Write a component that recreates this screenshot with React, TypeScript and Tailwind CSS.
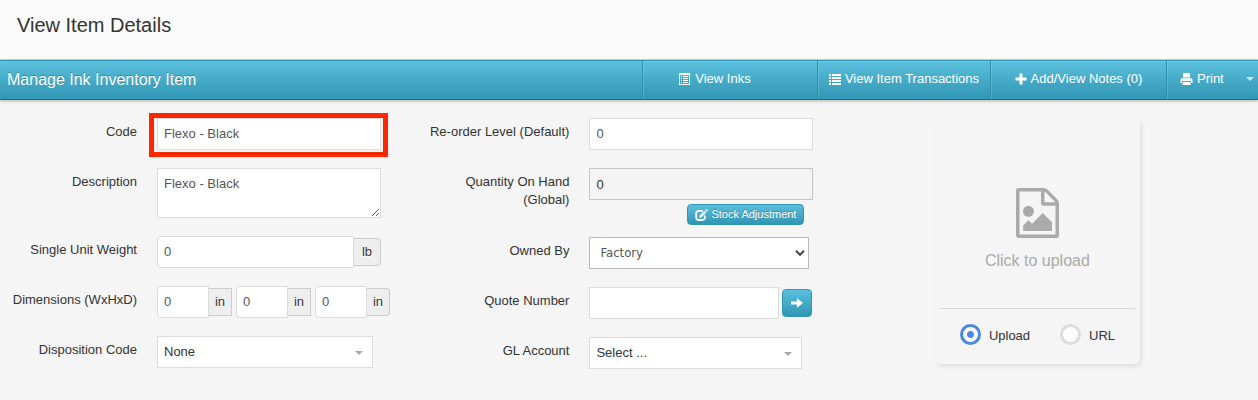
import React, { useState } from 'react';

const inputStyle =
  "h-8 border border-[#dcdcdc] bg-white px-1.5 pb-0.5 text-[13px] text-[#555] outline-none focus:border-sky-400";
const addonStyle =
  "flex h-7 items-center justify-center border border-l-0 border-[#ccc] bg-[#eee] text-[13px] text-[#333] [text-shadow:0_1px_0_#fff]";
const blueStyle =
  "bg-linear-to-b from-[#5bc0de] to-[#2f96b4] text-white [text-shadow:0_-1px_0_rgba(0,0,0,0.25)]";
const tabStyle =
  "flex h-full cursor-pointer items-center gap-1 border-l border-[#2f8fab] pb-0.5 text-[13px] shadow-[inset_1px_1px_0_rgba(255,255,255,0.15)]";

const ListAltIcon = () => (
  <svg width="12" height="12" viewBox="0 0 12 12" fill="currentColor">
    <path fillRule="evenodd" d="M0 0h11v12H0zM1 2v9h9V2z" />
    <path d="M2 3h1v1H2zM4 3h5v1H4zM2 5h1v1H2zM4 5h5v1H4zM2 7h1v1H2zM4 7h5v1H4zM2 9h1v1H2zM4 9h5v1H4z" />
  </svg>
);

const ListIcon = () => (
  <svg width="12" height="12" viewBox="0 0 12 12" fill="currentColor">
    <path d="M0 1h2v2H0zM3 1h9v2H3zM0 4h2v2H0zM3 4h9v2H3zM0 7h2v2H0zM3 7h9v2H3zM0 10h2v2H0zM3 10h9v2H3z" />
  </svg>
);

const PlusIcon = () => (
  <svg width="12" height="12" viewBox="0 0 12 12" fill="currentColor">
    <path d="M4.500 .5h3v4h4v3h-4v4h-3v-4H.5v-3h4z" />
  </svg>
);

const PrintIcon = () => (
  <svg width="13" height="12" viewBox="0 0 13 12" fill="currentColor">
    <path d="M3 0h6l1 1v3.500H3zM1.500 5.200h10L12.500 6.500V10H11V8H2v2H.5V6.500zM3 9h7l1 3H2z" />
  </svg>
);

const ShareIcon = () => (
  <svg width="13" height="12" viewBox="0 0 13 12" fill="none" stroke="currentColor">
    <path strokeWidth="1.800" d="M8 1.900H4A2.800 2.800 0 0 0 1.200 4.700v3.500A2.800 2.800 0 0 0 4 11h3.200A2.800 2.800 0 0 0 10 8.200V6.500" />
    <path fill="currentColor" stroke="none" d="M4 9 4.800 6.200 9.500 1.800 11.200 3.500 6.800 8.200zM10.200 1.100 11.300 0l1.700 1.700-1.100 1.100z" />
  </svg>
);

const ArrowIcon = () => (
  <svg width="12" height="10" viewBox="0 0 12 10" fill="currentColor">
    <path d="M0 3.500h6V.3L12 5 6 9.700V6.500H0z" />
  </svg>
);

const FileImageIcon = () => (
  <svg width="43" height="50" viewBox="0 0 43 50" fill="#aaa">
    <path
      fillRule="evenodd"
      d="M2.700 0H27.500Q30 0 31.800 1.800L41.200 11.200Q43 13 43 15.500V47.300Q43 50 40.300 50H2.700Q0 50 0 47.300V2.700Q0 0 2.700 0ZM3.500 3.600V46.500H39.500V17.800H27.700Q25 17.800 25 15.100V3.600ZM28.500 3.800V14.300H39Q38.600 13.400 38.200 13L29.900 4.600Q29.300 4 28.500 3.800Z"
    />
    <circle cx="12.500" cy="23.300" r="5.500" />
    <path d="M7.200 43V37.500L12.500 32.200 16 35.700 26.800 25 36 34.200V43Z" />
  </svg>
);

const Caret = ({ className }: { className: string }) => (
  <svg width="8" height="4" viewBox="0 0 8 4" fill="currentColor" className={className}>
    <path d="M0 0h8L4 4z" />
  </svg>
);

interface RowProps {
  id: string;
  label: React.ReactNode;
  children: React.ReactNode;
}

const Row: React.FC<RowProps> = ({ id, label, children }) => (
  <div className="flex items-start gap-5">
    <div className="flex w-[137px] shrink-0 justify-end pt-[5px]">
      <label htmlFor={id} className="text-right text-[13px] leading-[18px] whitespace-nowrap">
        {label}
      </label>
    </div>
    <div className="w-56 shrink-0">{children}</div>
  </div>
);

const PickList = ({ id, value, width }: { id: string; value: string; width: string }) => (
  <div className={`relative ${width}`}>
    <select id={id} className="h-8 w-full appearance-none border border-[#dcdcdc] bg-white px-1.5 text-[13px] text-[#333] outline-none">
      <option>{value}</option>
    </select>
    <Caret className="pointer-events-none absolute top-[15px] right-2.5 text-[#aaa]" />
  </div>
);

const Dimension = ({ id, label, last }: { id: string; label: string; last?: boolean }) => (
  <div className="flex items-center">
    <input id={id} aria-label={label} defaultValue="0" className={`${inputStyle} w-[52px] rounded-l-sm`} />
    <span className={`${addonStyle} w-[23px] ${last ? 'rounded-r-sm' : ''}`}>in</span>
  </div>
);

const UploadCard = () => {
  const [source, setSource] = useState('Upload');

  return (
    <div className="flex h-[246px] w-[205px] flex-col rounded-md px-[5px] shadow-[2px_3px_4px_rgba(0,0,0,0.08)]">
      <button className="flex h-[191px] cursor-pointer flex-col items-center gap-[11px] border-b border-[#d8d8d8] pt-[70px] text-base text-[#aaa]">
        <FileImageIcon />
        Click to upload
      </button>
      <div className="flex gap-[30px] pt-[15px] pl-5">
        {['Upload', 'URL'].map(name => (
          <label key={name} className="flex items-center gap-2 text-[13px]">
            <input
              type="radio"
              name="source"
              checked={source === name}
              onChange={() => setSource(name)}
              className="size-[21px] appearance-none rounded-full border-[3px] border-[#ddd] bg-white checked:border-[#4a89dc] checked:bg-[radial-gradient(circle,#4a89dc_3px,#fff_4px)]"
            />
            <span className="pt-0.5">{name}</span>
          </label>
        ))}
      </div>
    </div>
  );
};

export default function App() {
  return (
    <div className="min-h-screen bg-[#f5f5f5] font-['Liberation_Sans',Arial,sans-serif] text-[#333]">
      <header className="flex h-[60px] items-center border-b border-[#d4d4d4] bg-[#fafafa] px-[17px] pb-2.5">
        <h1 className="text-xl">View Item Details</h1>
      </header>

      <div className={`${blueStyle} flex h-10 items-center border-t border-b border-t-[#2f96b4] border-b-[#226f87] shadow-[0_1px_3px_rgba(0,0,0,0.3)]`}>
        <h2 className="flex-1 pl-[7px] text-base">Manage Ink Inventory Item</h2>
        <button className={`${tabStyle} w-[175px] justify-center pr-[30px]`}>
          <ListAltIcon />
          View Inks
        </button>
        <button className={`${tabStyle} w-[173px] justify-center`}>
          <ListIcon />
          View Item Transactions
        </button>
        <button className={`${tabStyle} w-44 justify-center`}>
          <PlusIcon />
          Add/View Notes (0)
        </button>
        <button className={`${tabStyle} w-[92px] pl-[13px]`}>
          <PrintIcon />
          Print
          <Caret className="mr-1 ml-auto text-white/70" />
        </button>
      </div>

      <form className="grid grid-cols-[11fr_11fr_10fr] pt-[18px]" onSubmit={e => e.preventDefault()}>
        <div className="flex flex-col gap-[18px]">
          <Row id="code" label="Code">
            <div className="relative flex">
              <input id="code" defaultValue="Flexo - Black" className={`${inputStyle} w-full`} />
              <div className="pointer-events-none absolute -top-[5px] -right-[7px] -bottom-[7px] -left-2 border-5 border-[#ff2600]" />
            </div>
          </Row>
          <Row id="description" label="Description">
            <textarea
              id="description"
              defaultValue="Flexo - Black"
              className="block h-[50px] w-full border border-[#dcdcdc] bg-white px-1.5 py-1.5 text-[13px] leading-[18px] text-[#555] outline-none"
            />
          </Row>
          <Row id="weight" label="Single Unit Weight">
            <div className="flex items-center">
              <input id="weight" defaultValue="0" className={`${inputStyle} min-w-0 flex-1 rounded-l-sm`} />
              <span className={`${addonStyle} w-[27px] rounded-r-sm`}>lb</span>
            </div>
          </Row>
          <Row id="width" label="Dimensions (WxHxD)">
            <div className="flex gap-1">
              <Dimension id="width" label="Width" />
              <Dimension id="height" label="Height" />
              <Dimension id="depth" label="Depth" last />
            </div>
          </Row>
          <Row id="disposition" label="Disposition Code">
            <PickList id="disposition" value="None" width="w-[216px]" />
          </Row>
        </div>

        <div className="flex flex-col gap-[18px]">
          <Row id="reorder" label="Re-order Level (Default)">
            <input id="reorder" defaultValue="0" className={`${inputStyle} block w-full`} />
          </Row>
          <div className="h-[51px]">
            <Row id="quantity" label={<>Quantity On Hand<br />(Global)</>}>
              <input
                id="quantity"
                readOnly
                defaultValue="0"
                className="block h-8 w-full border border-[#c4c4c4] bg-[#f4f4f4] px-1.5 text-[13px] text-[#333] outline-none"
              />
              <button className={`${blueStyle} mt-1 mr-[9px] ml-auto flex h-[21px] cursor-pointer items-center gap-[3px] rounded-sm border border-[#2f96b4] px-[7px] text-[11px] whitespace-nowrap`}>
                <ShareIcon />
                Stock Adjustment
              </button>
            </Row>
          </div>
          <Row id="owner" label="Owned By">
            <div className="relative w-[220px]">
              <select id="owner" className="h-8 w-full appearance-none border border-[#bbb] bg-white px-2.5 font-['DejaVu_Sans_Condensed','DejaVu_Sans',sans-serif] text-[13px] text-[#555] outline-none">
                <option>Factory</option>
              </select>
              <svg width="10" height="6" viewBox="0 0 10 6" fill="none" stroke="#444" strokeWidth="2" className="pointer-events-none absolute top-[13px] right-1">
                <path d="M1 .8l4 4 4-4" />
              </svg>
            </div>
          </Row>
          <Row id="quote" label="Quote Number">
            <div className="flex items-center gap-[3px]">
              <input id="quote" className={`${inputStyle} w-[190px]`} />
              <button aria-label="Open quote" className={`${blueStyle} flex h-7 w-[30px] cursor-pointer items-center justify-center rounded-sm border border-[#2f96b4]`}>
                <ArrowIcon />
              </button>
            </div>
          </Row>
          <Row id="account" label="GL Account">
            <PickList id="account" value="Select ..." width="w-[213px]" />
          </Row>
        </div>

        <div className="pl-[70px]">
          <UploadCard />
        </div>
      </form>
    </div>
  );
}
